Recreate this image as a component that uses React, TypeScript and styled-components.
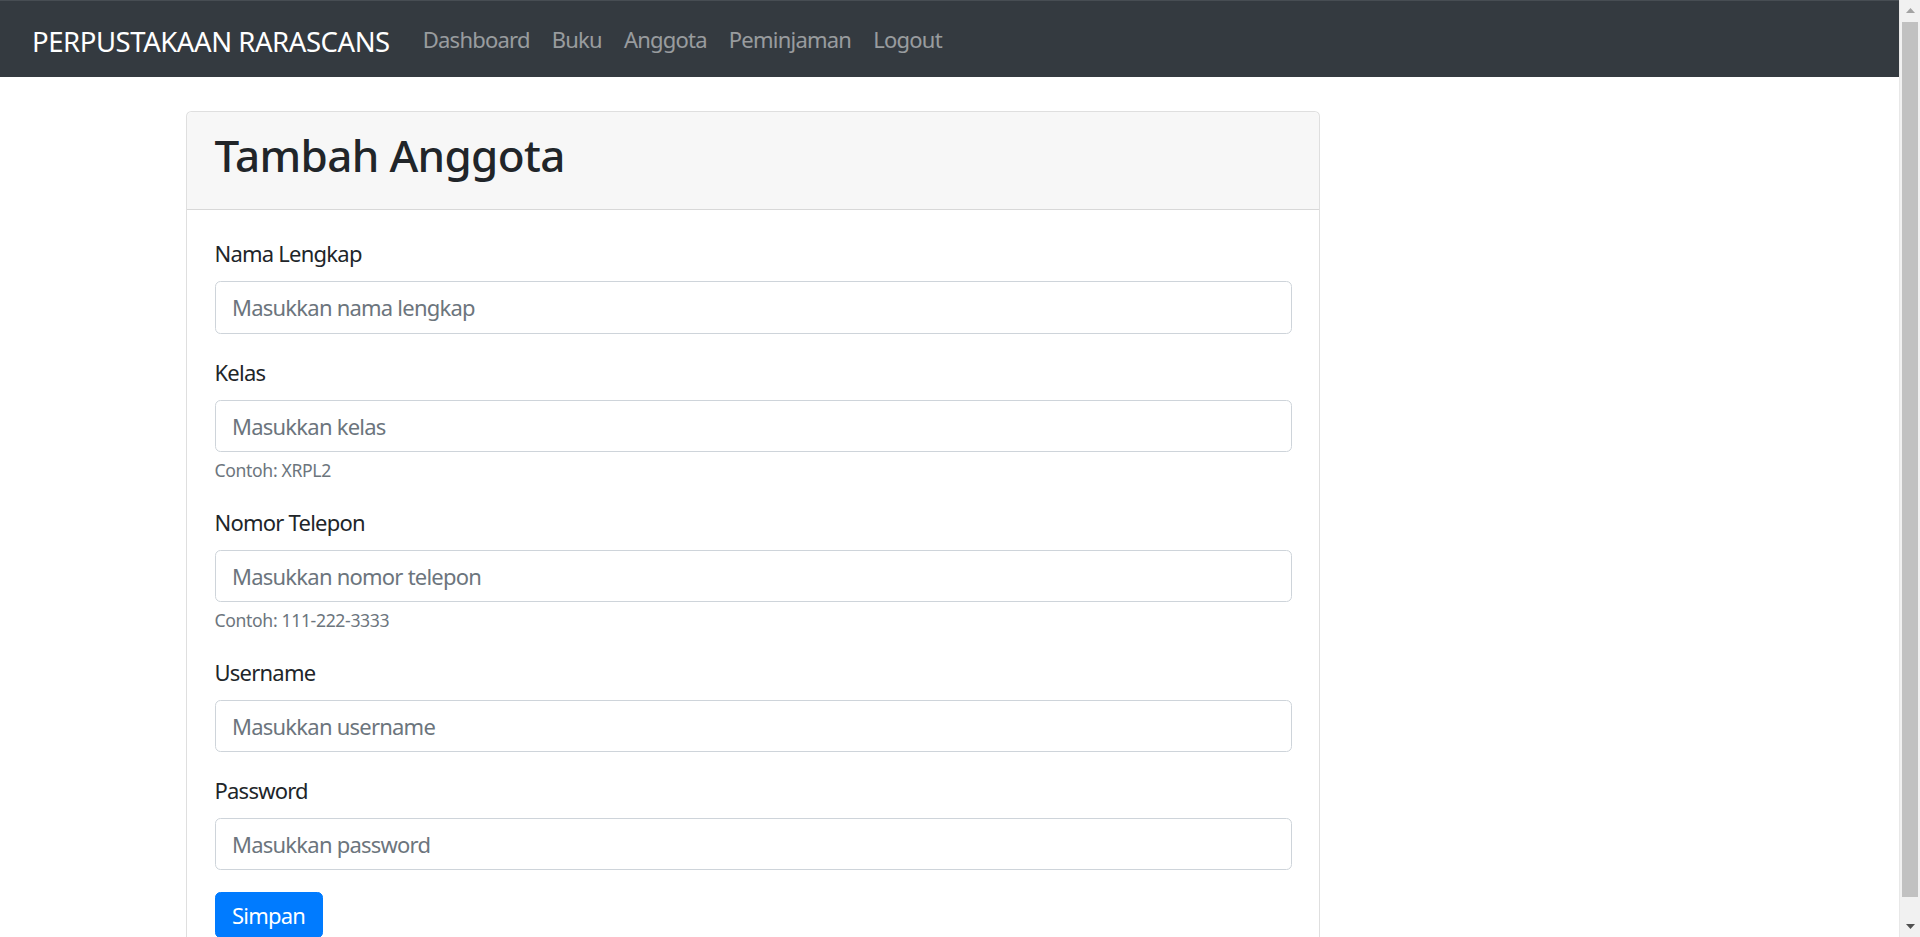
import React from "react";
import styled, { createGlobalStyle } from "styled-components";

const GlobalStyle = createGlobalStyle`
  body {
    margin: 0;
    padding-right: 21px;
    font-family: "Noto Sans", "Open Sans", sans-serif;
    font-size: 22px;
    line-height: 1.5;
    letter-spacing: -0.035em;
    color: #212529;
    background: #ffffff;
  }
  * {
    box-sizing: border-box;
  }
`;

const Navbar = styled.nav`
  display: flex;
  align-items: center;
  height: 77px;
  padding: 0 22px 0 32px;
  background: #343a40;
  border-top: 1px solid #474d53;
`;

const Brand = styled.a`
  font-size: 27.5px;
  line-height: 41px;
  letter-spacing: -0.016em;
  padding-top: 4px;
  margin-right: 22px;
  color: #ffffff;
  text-decoration: none;
  white-space: nowrap;
`;

const NavList = styled.ul`
  display: flex;
  list-style: none;
  margin: 0;
  padding: 0;
`;

const NavLink = styled.a`
  display: block;
  padding: 0 11px;
  font-size: 22px;
  line-height: 33px;
  color: rgba(255, 255, 255, 0.5);
  text-decoration: none;
`;

const Container = styled.main`
  max-width: 1568px;
  margin: 0 auto;
  padding: 34px 20.5px 0;
`;

const Card = styled.section`
  width: 1134px;
  background: #ffffff;
  border: 1px solid rgba(0, 0, 0, 0.125);
  border-radius: 5.5px;
`;

const CardHeader = styled.header`
  padding: 16.5px 27.5px;
  background: rgba(0, 0, 0, 0.03);
  border-bottom: 1px solid rgba(0, 0, 0, 0.125);
  border-radius: 5.5px 5.5px 0 0;
`;

const Title = styled.h1`
  margin: 0 0 11px;
  font-size: 44px;
  font-weight: 500;
  line-height: 52.8px;
  letter-spacing: -0.015em;
`;

const CardBody = styled.form`
  padding: 27.5px;
`;

const FormGroup = styled.div`
  margin-bottom: 22px;
`;

const Label = styled.label`
  display: block;
  margin-bottom: 11px;
  font-size: 22px;
  line-height: 33px;
`;

const Input = styled.input`
  display: block;
  width: 100%;
  height: 52.25px;
  padding: 5.2px 16.5px;
  font-family: inherit;
  font-size: 22px;
  line-height: 33px;
  letter-spacing: inherit;
  color: #495057;
  background: #ffffff;
  border: 1px solid #ced4da;
  border-radius: 5.5px;
  outline: none;

  &::placeholder {
    color: #6c757d;
    opacity: 1;
  }
`;

const Hint = styled.small`
  display: block;
  margin-top: 5.5px;
  font-size: 17.6px;
  line-height: 26.4px;
  letter-spacing: -0.02em;
  color: #6c757d;
`;

const Button = styled.button`
  display: inline-block;
  padding: 5.2px 16.5px;
  font-family: inherit;
  font-size: 22px;
  line-height: 33px;
  letter-spacing: inherit;
  color: #ffffff;
  background: #007bff;
  border: 1px solid #007bff;
  border-radius: 5.5px;
  cursor: pointer;
`;

/* the window's scrollbar, drawn in the gutter on the right */
const ScrollTrack = styled.div`
  position: fixed;
  top: 0;
  right: 0;
  bottom: 0;
  width: 21px;
  display: flex;
  flex-direction: column;
  background: #f1f1f1;
  border-left: 1px solid #e8e8e8;
`;

const ScrollArrow = styled.div`
  display: flex;
  align-items: center;
  justify-content: center;
  height: 21px;
  flex: none;
`;

const ScrollThumb = styled.div`
  flex: 1;
  margin: 1px 2px 19px 2px;
  background: #c1c1c1;
`;

type Field = {
  label: string;
  placeholder: string;
  type?: string;
  hint?: string;
};

const fields: Field[] = [
  { label: "Nama Lengkap", placeholder: "Masukkan nama lengkap" },
  { label: "Kelas", placeholder: "Masukkan kelas", hint: "Contoh: XRPL2" },
  {
    label: "Nomor Telepon",
    placeholder: "Masukkan nomor telepon",
    hint: "Contoh: 111-222-3333",
  },
  { label: "Username", placeholder: "Masukkan username" },
  { label: "Password", placeholder: "Masukkan password", type: "password" },
];

const links = ["Dashboard", "Buku", "Anggota", "Peminjaman", "Logout"];

export default function App() {
  return (
    <>
      <GlobalStyle />
      <Navbar>
        <Brand href="#">PERPUSTAKAAN RARASCANS</Brand>
        <NavList>
          {links.map((l) => (
            <li key={l}>
              <NavLink href="#">{l}</NavLink>
            </li>
          ))}
        </NavList>
      </Navbar>
      <Container>
        <Card>
          <CardHeader>
            <Title>Tambah Anggota</Title>
          </CardHeader>
          <CardBody onSubmit={(e) => e.preventDefault()}>
            {fields.map((f) => (
              <FormGroup key={f.label}>
                <Label>{f.label}</Label>
                <Input type={f.type ?? "text"} placeholder={f.placeholder} />
                {f.hint && <Hint>{f.hint}</Hint>}
              </FormGroup>
            ))}
            <Button type="submit">Simpan</Button>
          </CardBody>
        </Card>
      </Container>
      <ScrollTrack>
        <ScrollArrow>
          <svg width="9" height="5" viewBox="0 0 9 5">
            <path d="M0 5 L4.5 0 L9 5 Z" fill="#a3a3a3" />
          </svg>
        </ScrollArrow>
        <ScrollThumb />
        <ScrollArrow>
          <svg width="9" height="5" viewBox="0 0 9 5">
            <path d="M0 0 L4.5 5 L9 0 Z" fill="#505050" />
          </svg>
        </ScrollArrow>
      </ScrollTrack>
    </>
  );
}
